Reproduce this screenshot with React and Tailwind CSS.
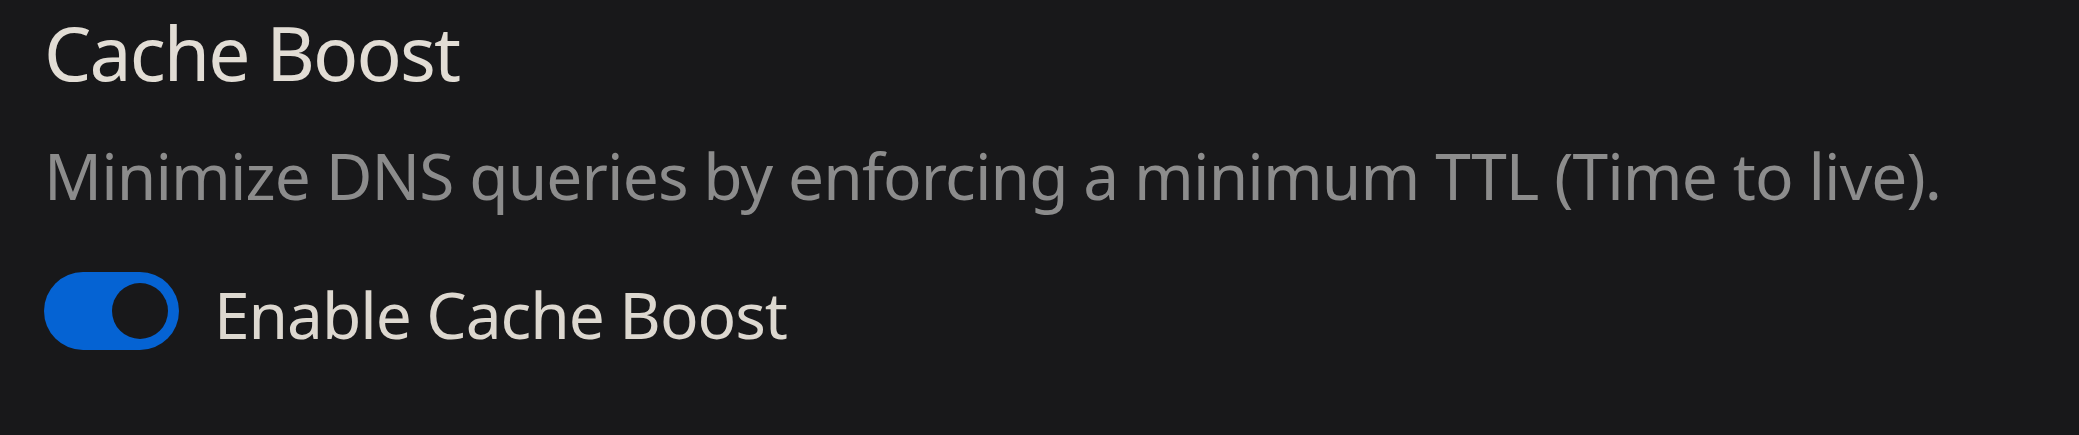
import React, { useState } from "react";

function Toggle({ on, onChange }) {
  return (
    <button
      type="button"
      onClick={() => onChange(!on)}
      className={
        "relative shrink-0 w-[135px] h-[78px] rounded-full transition-colors " +
        (on ? "bg-[#0563d3]" : "bg-[#3c3c3c]")
      }
    >
      <span
        className={
          "absolute top-[11px] w-[56px] h-[56px] rounded-full bg-[#18181a] transition-all " +
          (on ? "left-[68px]" : "left-[11px]")
        }
      />
    </button>
  );
}

export default function App() {
  const [enabled, setEnabled] = useState(true);

  return (
    <div className="w-[2079px] h-[435px] bg-[#18181a] pl-[44px] pt-[15px] font-['Noto_Sans',sans-serif]">
      {/* title */}
      <h2 className="text-[75px] leading-none tracking-[-1.9px] text-[#e2ddd5] font-normal">Cache Boost</h2>

      {/* description */}
      <p className="mt-[54px] text-[64px] leading-none tracking-[-0.9px] text-[#8c8c8c] whitespace-nowrap">
        Minimize DNS queries by enforcing a minimum TTL (Time to live).
      </p>

      {/* toggle row */}
      <div className="mt-[64px] flex items-start gap-[35px]">
        <Toggle on={enabled} onChange={setEnabled} />
        <span className="mt-[11px] text-[64px] leading-none tracking-[-1.05px] text-[#ddd8d0]">Enable Cache Boost</span>
      </div>
    </div>
  );
}
